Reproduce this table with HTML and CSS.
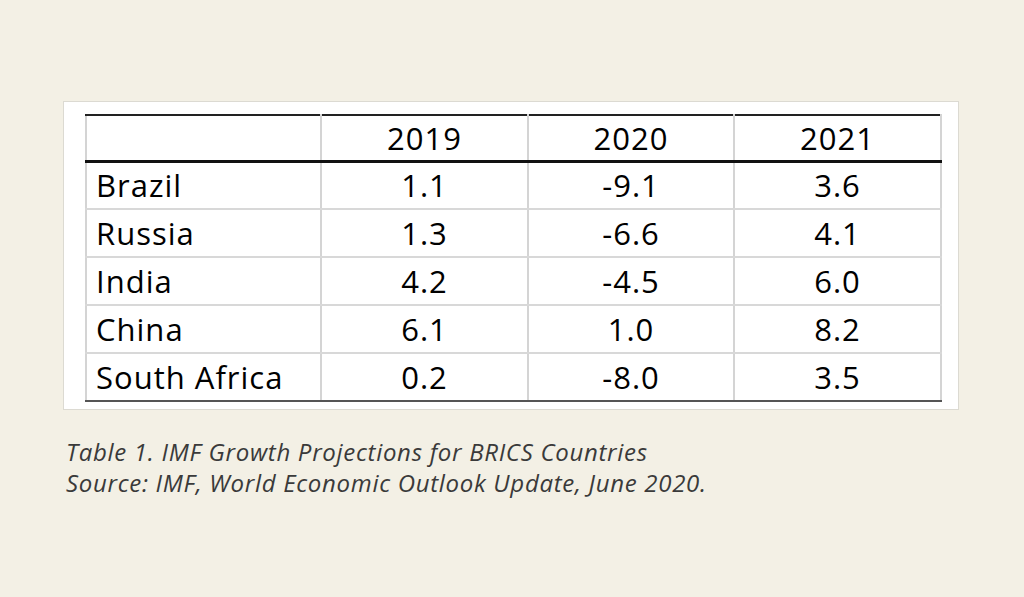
FILE: index.html
```html
<!DOCTYPE html>
<html>
<head>
<meta charset="utf-8">
<link rel="stylesheet" href="styles.css">
</head>
<body>
<div class="page">
  <div class="card">
    <table class="data">
      <colgroup><col class="c-name"><col class="c-num"><col class="c-num2"><col class="c-num"></colgroup>
      <thead>
        <tr><th class="name"></th><th>2019</th><th>2020</th><th>2021</th></tr>
      </thead>
      <tbody>
        <tr><td class="name">Brazil</td><td>1.1</td><td>-9.1</td><td>3.6</td></tr>
        <tr><td class="name">Russia</td><td>1.3</td><td>-6.6</td><td>4.1</td></tr>
        <tr><td class="name">India</td><td>4.2</td><td>-4.5</td><td>6.0</td></tr>
        <tr><td class="name">China</td><td>6.1</td><td>1.0</td><td>8.2</td></tr>
        <tr><td class="name">South Africa</td><td>0.2</td><td>-8.0</td><td>3.5</td></tr>
      </tbody>
    </table>
  </div>
  <p class="caption">Table 1. IMF Growth Projections for BRICS Countries<br>Source: IMF, World Economic Outlook Update, June 2020.</p>
</div>
</body>
</html>
```
FILE: styles.css
```css
html, body {
  margin: 0;
  padding: 0;
  background: #f3f0e5;
}
.page {
  width: 1024px;
  height: 597px;
  padding: 101px 0 0 63px;
  box-sizing: border-box;
}
.card {
  width: 896px;
  height: 309px;
  box-sizing: border-box;
  background: #fff;
  border: 1px solid #dcdad2;
  padding: 12px 0 0 21px;
}
.data {
  border-collapse: collapse;
  font-family: "Open Sans", "Liberation Sans", sans-serif;
  font-size: 31px;
  letter-spacing: 1px;
  color: #000;
  table-layout: fixed;
  width: 855px;
}
.c-name { width: 235px; }
.c-num { width: 207px; }
.c-num2 { width: 206px; }
.data tr { height: 48px; }
.data thead tr { height: 46px; }
.data th, .data td {
  padding: 0;
  text-align: center;
  font-weight: normal;
  border-left: 2px solid #d4d4d4;
  border-right: 2px solid #d4d4d4;
  border-bottom: 2px solid #d8d8d8;
  line-height: 1;
  vertical-align: middle;
}
.data th { border-top: 2px solid #222; border-bottom: 3px solid #111; padding-top: 2px; }
.data .name { text-align: left; padding-left: 9px; }
.data tbody tr:last-child td { border-bottom: 2px solid #555; }
.caption {
  margin: 26px 0 0 3px;
  font-family: "Open Sans", "Lato", sans-serif;
  font-style: italic;
  font-size: 24px;
  line-height: 31px;
  color: #3a3a3a;
  letter-spacing: 0.7px;
}
```
